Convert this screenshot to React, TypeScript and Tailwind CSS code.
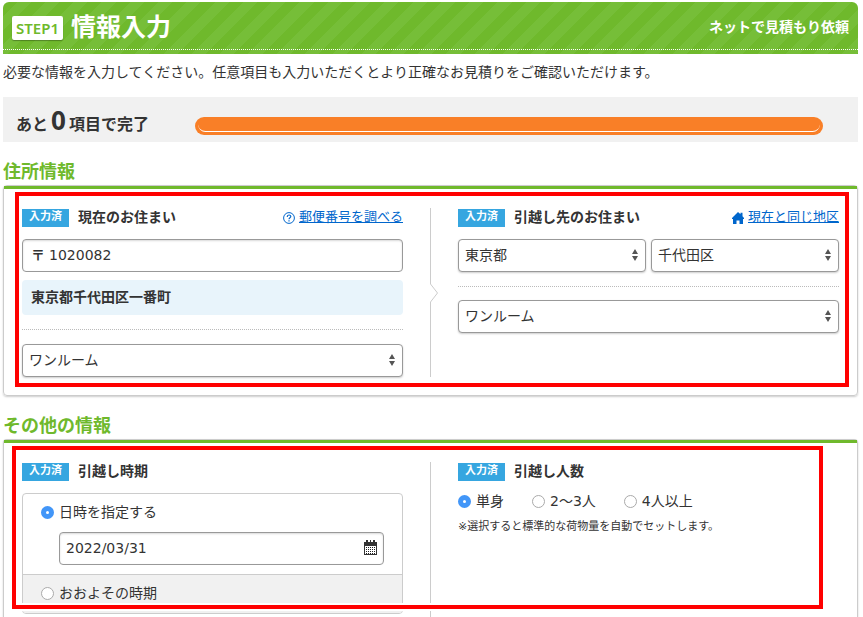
import { useState } from 'react';
import type { ReactNode, SelectHTMLAttributes, InputHTMLAttributes } from 'react';

const FIELD =
  'w-full h-[33px] rounded border border-[#999] bg-white pb-0.5 text-sm text-[#333]';

function Badge() {
  return (
    <span className="h-[18px] w-[47px] shrink-0 bg-[#36a6e0] text-center text-[11px] leading-4 font-bold text-white">
      入力済
    </span>
  );
}

function SectionTitle({ children }: { children: ReactNode }) {
  return (
    <h2 className="mt-[18px] mb-px text-lg leading-6 font-bold text-[#6fb92c]">{children}</h2>
  );
}

function ColumnHead({ title, children }: { title: string; children?: ReactNode }) {
  return (
    <div className="mb-[11px] flex h-5 items-center">
      <Badge />
      <h3 className="ml-[9px] pb-0.5 text-sm leading-5 font-bold">{title}</h3>
      {children}
    </div>
  );
}

function HelperLink({ icon, children }: { icon: ReactNode; children: ReactNode }) {
  return (
    <a href="#" className="ml-auto flex items-center gap-1 text-[13px] leading-5 text-[#0066cc]">
      {icon}
      <span className="pb-0.5 underline">{children}</span>
    </a>
  );
}

function Select({ children, ...props }: SelectHTMLAttributes<HTMLSelectElement>) {
  return (
    <div className="relative flex-1">
      <select {...props} className={`${FIELD} appearance-none pr-6 pl-1.5 shadow-[0_1px_2px_rgba(0,0,0,0.2)]`}>
        {children}
      </select>
      <svg
        className="pointer-events-none absolute top-2.5 right-2 h-3 w-1.5"
        viewBox="0 0 6 12"
        fill="#555"
      >
        <path d="M3 0l3 5H0zM3 12L0 7h6z" />
      </svg>
    </div>
  );
}

function Radio({ label, ...props }: InputHTMLAttributes<HTMLInputElement> & { label: string }) {
  return (
    <label className="flex h-5 items-center gap-[5px] text-sm leading-5">
      <input
        type="radio"
        {...props}
        className="size-[13px] shrink-0 appearance-none rounded-full border border-[#aaa] bg-white checked:border-[5px] checked:border-[#4296f8]"
      />
      {label}
    </label>
  );
}

function CalendarIcon() {
  return (
    <svg className="h-[15px] w-[13px]" viewBox="0 0 13 15" fill="#333">
      <path d="M0 2h13v13H0zM1 6v8h11V6z" fillRule="evenodd" />
      <path d="M2 0h2v2H2zM6 0h1v2H6zM9 0h2v2H9z" />
      <path
        d="M2 7h1v1H2zM4 7h1v1H4zM6 7h1v1H6zM8 7h1v1H8zM10 7h1v1h-1zM2 9h1v1H2zM4 9h1v1H4zM6 9h1v1H6zM8 9h1v1H8zM10 9h1v1h-1zM2 11h1v1H2zM4 11h1v1H4zM6 11h1v1H6zM8 11h1v1H8zM10 11h1v1h-1zM2 13h1v1H2zM4 13h1v1H4zM6 13h1v1H6zM8 13h1v1H8zM10 13h1v1h-1z"
        fill="#222"
      />
    </svg>
  );
}

export default function App() {
  const [zip, setZip] = useState('1020082');
  const [date, setDate] = useState('2022/03/31');
  const [timing, setTiming] = useState('date');
  const [people, setPeople] = useState('1');

  return (
    <main className="min-h-screen bg-white pt-0.5 pr-[5px] pl-[3px] font-['DejaVu_Sans','Noto_Sans_CJK_JP',sans-serif] text-[#333]">
      {/* Header */}
      <header className="rounded-t-md bg-[#6fb92c] bg-[repeating-linear-gradient(135deg,#6fb92c_0,#6fb92c_10px,#76be38_10px,#76be38_20px)] pb-1 text-white">
        <div className="flex h-12 items-center border-b border-dotted border-white px-[9px] pt-1">
          <span className="h-6 rounded-xs bg-white px-1 font-['Noto_Sans',sans-serif] text-[15px] leading-6 font-semibold text-[#6fb92c] shadow-[0_1px_1px_rgba(0,0,0,0.3)]">
            STEP1
          </span>
          <h1 className="ml-2 text-[25px] leading-8 font-bold">情報入力</h1>
          <p className="ml-auto pb-0.5 text-sm leading-5 font-bold">ネットで見積もり依頼</p>
        </div>
      </header>

      <p className="mt-1.5 text-sm leading-6">
        必要な情報を入力してください。任意項目も入力いただくとより正確なお見積りをご確認いただけます。
      </p>

      {/* Progress */}
      <div className="mt-[13px] flex h-[45px] items-center bg-[#f1f1f1] pt-2 pr-[35px] pl-[13px]">
        <p className="flex w-[179px] items-baseline pb-0.5 text-base leading-8 font-bold">
          あと
          <span className="mx-[3px] font-['Noto_Sans',sans-serif] text-[26px] leading-8">0</span>
          項目で完了
        </p>
        <div className="mt-1 h-[18px] flex-1 rounded-full bg-[#f97f27] px-[3px] pb-[3px]">
          <div className="h-full rounded-full border-b border-white" />
        </div>
      </div>

      {/* Address */}
      <SectionTitle>住所情報</SectionTitle>
      <section className="relative rounded border border-[#ccc] shadow-[0_1px_2px_rgba(0,0,0,0.2)]">
        <div className="flex border-t-[3px] border-[#6fb92c] px-[18px] pt-[19px] pb-[18px]">
          <div className="min-w-0 flex-1">
            <ColumnHead title="現在のお住まい">
              <HelperLink
                icon={
                  <svg className="size-3" viewBox="0 0 12 12" fill="none" stroke="#0066cc">
                    <circle cx="6" cy="6" r="5.4" />
                    <path d="M4.2 4.9c0-2.5 3.6-2.4 3.6-.4C7.8 5.7 6 5.7 6 7.3M6 8.3v1.2" strokeWidth="1.2" />
                  </svg>
                }
              >
                郵便番号を調べる
              </HelperLink>
            </ColumnHead>
            <label className={`${FIELD} flex items-center gap-1 px-2 shadow-[inset_0_1px_2px_rgba(0,0,0,0.15)]`}>
              <span className="font-bold">〒</span>
              <input
                value={zip}
                onChange={(e) => setZip(e.target.value)}
                aria-label="郵便番号"
                className="min-w-0 flex-1 outline-none"
              />
            </label>
            <p className="mt-2 h-[35px] rounded bg-[#e8f4fb] px-[9px] text-sm leading-[34px] font-bold">
              東京都千代田区一番町
            </p>
            <hr className="my-3.5 border-dotted border-[#bbb]" />
            <div className="flex">
              <Select aria-label="現在の間取り">
                <option>ワンルーム</option>
              </Select>
            </div>
          </div>

          <div className="relative mx-[27px] w-px bg-[#ccc]">
            <svg
              className="absolute top-1/2 left-0 h-[18px] w-2 -translate-y-1/2 bg-white"
              viewBox="0 0 8 18"
              fill="none"
              stroke="#ccc"
            >
              <path d="M.5 0L7.5 9 .5 18" />
            </svg>
          </div>

          <div className="min-w-0 flex-1">
            <ColumnHead title="引越し先のお住まい">
              <HelperLink
                icon={
                  <svg className="size-3" viewBox="0 0 12 12" fill="#0066cc">
                    <path d="M6 0l2.500 2.300V.8h2v3.500L12 6v1h-1v5H7.500V8.500h-3V12H1V7H0V6z" />
                  </svg>
                }
              >
                現在と同じ地区
              </HelperLink>
            </ColumnHead>
            <div className="flex gap-[5px]">
              <Select aria-label="都道府県">
                <option>東京都</option>
              </Select>
              <Select aria-label="市区町村">
                <option>千代田区</option>
              </Select>
            </div>
            <hr className="mt-3.5 mb-[13px] border-dotted border-[#bbb]" />
            <div className="flex">
              <Select aria-label="引越し先の間取り">
                <option>ワンルーム</option>
              </Select>
            </div>
          </div>
        </div>
        <div className="pointer-events-none absolute top-1.5 right-2 bottom-2 left-[11px] border-4 border-[#ff0000]" />
      </section>

      {/* Other */}
      <SectionTitle>その他の情報</SectionTitle>
      <section className="relative rounded-t border border-b-0 border-[#ccc] shadow-[0_1px_2px_rgba(0,0,0,0.2)]">
        <div className="flex border-t-[3px] border-[#6fb92c] px-[18px] pt-[19px]">
          <div className="min-w-0 flex-1 pb-[3px]">
            <ColumnHead title="引越し時期" />
            <div className="overflow-hidden rounded border border-[#ccc]">
              <div className="px-[18px] pt-2 pb-[9px]">
                <Radio
                  label="日時を指定する"
                  name="timing"
                  checked={timing === 'date'}
                  onChange={() => setTiming('date')}
                />
                <div className="mt-2.5 ml-[18px]">
                  <div className={`${FIELD} flex items-center px-1.5 shadow-[inset_0_1px_2px_rgba(0,0,0,0.15)]`}>
                    <input
                      value={date}
                      onChange={(e) => setDate(e.target.value)}
                      aria-label="引越し日"
                      className="min-w-0 flex-1 outline-none"
                    />
                    <button type="button" aria-label="カレンダー">
                      <CalendarIcon />
                    </button>
                  </div>
                </div>
              </div>
              <div className="border-t border-[#ccc] bg-[#f1f1f1] px-[18px] pt-2 pb-2.5">
                <Radio
                  label="おおよその時期"
                  name="timing"
                  checked={timing === 'rough'}
                  onChange={() => setTiming('rough')}
                />
              </div>
            </div>
          </div>

          <div className="mx-[27px] w-px bg-[#ccc]" />

          <div className="min-w-0 flex-1">
            <ColumnHead title="引越し人数" />
            <div className="-mt-0.5 flex gap-7">
              <Radio label="単身" name="people" checked={people === '1'} onChange={() => setPeople('1')} />
              <Radio label="2〜3人" name="people" checked={people === '2'} onChange={() => setPeople('2')} />
              <Radio label="4人以上" name="people" checked={people === '4'} onChange={() => setPeople('4')} />
            </div>
            <p className="mt-1.5 text-[11px] leading-5">
              ※選択すると標準的な荷物量を自動でセットします。
            </p>
          </div>
        </div>
        <div className="pointer-events-none absolute top-1.5 right-[34px] bottom-2 left-2 border-4 border-[#ff0000] shadow-[0_0_0_2px_white,inset_0_0_0_2px_white]" />
      </section>
    </main>
  );
}
